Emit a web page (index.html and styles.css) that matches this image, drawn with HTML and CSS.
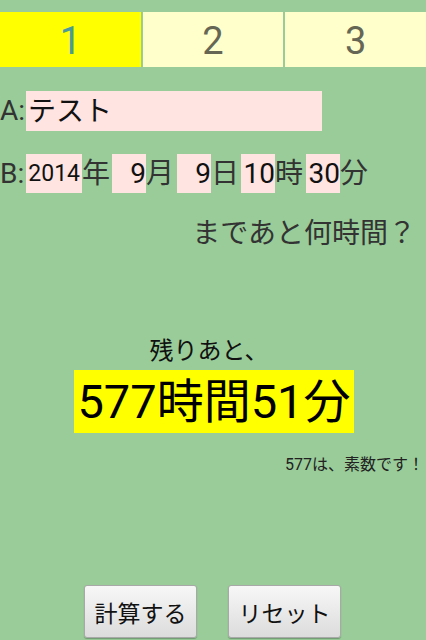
FILE: index.html
```html
<!DOCTYPE html>
<html lang="ja">
<head>
<meta charset="utf-8">
<link rel="stylesheet" href="styles.css">
</head>
<body>
<div class="screen">
  <div class="tabs">
    <div class="tab active">1</div>
    <div class="tab">2</div>
    <div class="tab">3</div>
  </div>
  <div class="row row-a">
    <span class="label">A:</span>
    <span class="field field-name">テスト</span>
  </div>
  <div class="row row-b">
    <span class="label">B:</span>
    <span class="field field-year">2014</span><span class="unit">年</span>
    <span class="field field-num f-month">9</span><span class="unit">月</span>
    <span class="field field-num f-day">9</span><span class="unit">日</span>
    <span class="field field-num f-hour">10</span><span class="unit">時</span>
    <span class="field field-num f-min">30</span><span class="unit">分</span>
  </div>
  <div class="question">まであと何時間？</div>
  <div class="result">
    <div class="remain">残りあと、</div>
    <div class="big">577時間51分</div>
  </div>
  <div class="prime">577は、素数です！</div>
  <div class="spacer"></div>
  <div class="buttons">
    <button class="btn btn-calc">計算する</button>
    <button class="btn btn-reset">リセット</button>
  </div>
</div>
</body>
</html>
```
FILE: styles.css
```css
html, body {
  margin: 0;
  padding: 0;
}
body {
  background: #99cc99;
  font-family: Roboto, "Noto Sans CJK JP", sans-serif;
  color: #333;
}
.screen {
  width: 426px;
  height: 640px;
  display: flex;
  flex-direction: column;
  overflow: hidden;
}
.tabs {
  margin-top: 12px;
  height: 55px;
  display: flex;
  gap: 2px;
}
.tab {
  flex: 1;
  background: #ffffcc;
  color: #666655;
  font-size: 38px;
  display: flex;
  align-items: center;
  justify-content: center;
  padding-top: 2px;
  box-sizing: border-box;
}
.tab.active {
  background: #ffff00;
  color: #4a9a9a;
}
.row {
  display: flex;
  align-items: center;
  font-size: 28px;
  line-height: 40px;
}
.row-a {
  margin-top: 24px;
  height: 40px;
}
.row-b {
  margin-top: 23px;
  height: 39px;
}
.label {
  width: 26px;
  color: #333;
}
.field {
  background: #ffe4e1;
  color: #111;
  height: 100%;
  display: flex;
  align-items: center;
}
.field-name {
  width: 296px;
  padding-left: 2px;
  padding-top: 2px;
  box-sizing: border-box;
}
.field-year {
  width: 56px;
  font-size: 23px;
  justify-content: flex-end;
  padding-right: 2px;
  box-sizing: border-box;
}
.field-num {
  width: 34px;
  justify-content: flex-end;
}
.unit {
  width: 28px;
  color: #333;
}
.f-month { margin-left: 2px; }
.f-day { margin-left: 3px; }
.f-hour { margin-left: 2px; }
.f-min { margin-left: 3px; }
.question {
  margin-top: 21px;
  text-align: right;
  padding-right: 10px;
  font-size: 28px;
  line-height: 40px;
  color: #333;
}
.result {
  margin-top: 82px;
  display: flex;
  flex-direction: column;
  align-items: center;
  margin-left: 2px;
}
.remain {
  font-size: 24px;
  line-height: 30px;
  color: #111;
  padding-right: 10px;
}
.big {
  margin-top: 4px;
  background: #ffff00;
  color: #000;
  font-size: 47px;
  line-height: 63px;
  padding: 0 3px;
}
.prime {
  margin-top: 21px;
  text-align: right;
  font-size: 16px;
  line-height: 22px;
  color: #222;
  padding-right: 2px;
}
.spacer {
  flex: 1;
}
.buttons {
  display: flex;
  justify-content: center;
  gap: 31px;
  margin-bottom: 2px;
  padding-right: 1px;
}
.btn {
  width: 113px;
  height: 53px;
  font-family: Roboto, "Noto Sans CJK JP", sans-serif;
  font-size: 23px;
  color: #111;
  background: linear-gradient(#f7f7f7, #dcdcdc);
  border: 1px solid #a8a8a8;
  border-radius: 3px;
  box-shadow: 0 1px 1px rgba(0,0,0,0.25);
  padding: 0;
}
```
